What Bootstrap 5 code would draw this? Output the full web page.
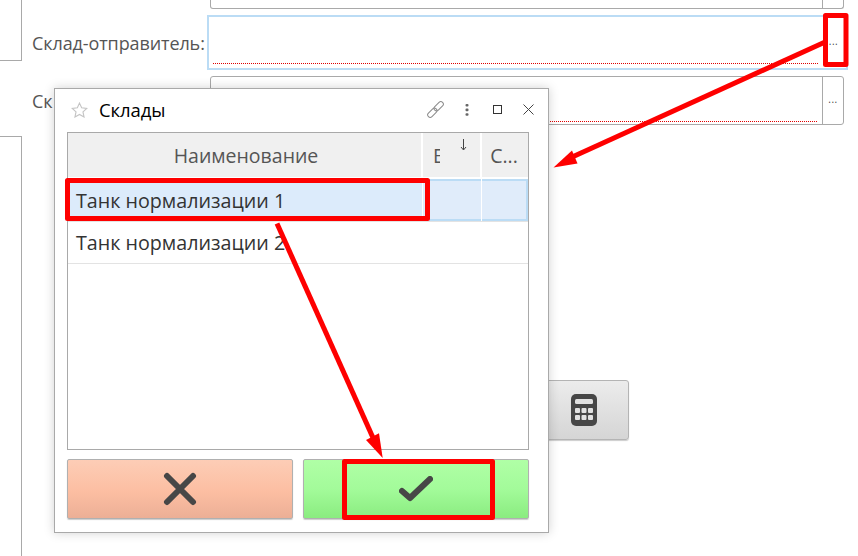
<!DOCTYPE html>
<html lang="ru">
<head>
<meta charset="utf-8">
<title>Склады</title>
<link href="https://cdn.jsdelivr.net/npm/bootstrap@5.3.0/dist/css/bootstrap.min.css" rel="stylesheet">
<style>
html,body{height:556px;overflow:hidden;background:#fff}
body{position:relative;font-family:"Open Sans","Noto Sans",sans-serif;color:#555}
.side-strip{width:22px;flex:none}
.side-box{width:22px;border:1px solid #a9a9a9;border-left:0}
.side-top{height:61px;border-top:0}
.side-bottom{height:420px;border-bottom:0;margin-top:75px}
.form-area{width:634px;margin-left:188px;flex:none}
.fld{border:1px solid #a9a9a9;border-radius:3px;display:flex;position:relative;background:#fff}
.fld-cut{height:9px;border-top:0;border-radius:0 0 3px 3px}
.fld-main{height:49px;margin-top:6px}
.fld-body{flex:1;position:relative}
.dots-line{position:absolute;height:1px;background:repeating-linear-gradient(90deg,#e00000 0 1px,transparent 1px 2px)}
.fld-body .dots-line{left:3px;right:4px;bottom:2px}
.fld-btn{width:21px;border-left:1px solid #a9a9a9;display:flex;align-items:center;justify-content:center;font-size:10px;line-height:1;letter-spacing:.5px;color:#444;padding-bottom:3px}
.row-line{display:flex;align-items:center}
.lbl{font-size:18px;line-height:22px;white-space:nowrap;width:178px;margin-left:-178px;flex:none;letter-spacing:-.1px}
.lbl-a{margin-left:-177px;width:177px}
.lbl-b{margin-top:6px}
.focus-wrap{height:55px;margin:6px -4px 0 -3px;border:2px solid #bbdcf5;position:relative;background:#fff}
.focus-wrap .dots-line{left:4px;right:27px;bottom:4px}
.focus-btn{position:absolute;right:2px;top:0;bottom:0;width:21px;display:flex;align-items:center;justify-content:center;font-size:10px;letter-spacing:.5px;color:#444;padding-bottom:3px;line-height:1}
.calc-btn{width:200px;height:60px;margin:255px 0 0 219px;border:1px solid #b4b4b4;border-radius:3px;background:linear-gradient(#ececec,#d5d5d5);display:flex;align-items:center;justify-content:flex-end;padding-right:31px;box-shadow:0 1px 1px #ccc}
.dlg{position:absolute;left:54px;top:88px;width:495px;height:445px;background:#fff;border:1px solid #a9a9a9;box-shadow:0 0 10px rgba(0,0,0,.18);padding:0 19px 0 12px;display:flex;flex-direction:column}
.dlg-head{height:43px;display:flex;align-items:center;flex:none;padding-bottom:2px}
.dlg-title{font-size:18.500px;color:#000;margin-left:11px;letter-spacing:-.1px}
.dlg-tools{margin-left:auto;margin-right:-15px;display:flex;align-items:center}
.tool{width:31px;height:20px;display:flex;align-items:center;justify-content:center}
.grid-wrap{height:318px;border:1px solid #a9a9a9;flex:none;overflow:hidden}
.grid-head{display:flex;height:44px;background:#f0f0f0;font-size:19.500px;color:#555}
.gh{display:flex;align-items:center;justify-content:center;border-right:2px solid #fff;position:relative;overflow:hidden;padding-top:2px}
.gh.c1{padding-left:3px}
.c1{width:355px;flex:none}
.c2{width:59px;flex:none}
.c3{width:46px;flex:none}
.gh.c3{border-right:0;padding-right:2px}
.clip-e{display:block;width:7px;overflow:hidden;position:absolute;left:10px;top:11px;line-height:24px}
.sort-mark{position:absolute;left:37px;top:6px}
.grid-row{display:flex;font-size:19.700px;color:#333;line-height:24px}
.row-sel{height:42px;margin-top:2px;background:#e0ecfa;box-shadow:inset -2px 0 #bbdcf5,inset 0 2px #bbdcf5,inset 0 -2px #bbdcf5;position:relative}
.row-sel .c1{background:#dcebfb;padding:10px 8px 8px}
.row-sel .c2,.row-sel .c1{border-right:1px solid #fff}
.sel-line{height:1px;background:#e3e3e3}
.row-plain{height:42px;border-bottom:1px solid #e3e3e3}
.row-plain .c1{padding:9px 8px}
.dlg-btns{display:flex;gap:10px;margin-top:9px;flex:none}
.act{height:60px;flex:1;border:1px solid #b0b0b0;border-radius:2px;display:flex;align-items:center;justify-content:center;box-shadow:0 1px 1px #ccc;padding:0}
.act-no{background:linear-gradient(#fdcdb6,#fcbea2 55%,#ecaf96)}
.act-ok{background:linear-gradient(#b0ffa6,#a3fb9a 50%,#8aec80)}
.marks{position:absolute;left:0;top:0;width:858px;height:556px;pointer-events:none}
</style>
</head>
<body>
<div class="d-flex">
  <div class="side-strip">
    <div class="side-box side-top"></div>
    <div class="side-box side-bottom"></div>
  </div>
  <div class="form-area">
    <div class="fld fld-cut"><div class="fld-body"></div><div class="fld-btn"></div></div>
    <div class="row-line focus-wrap">
      <div class="lbl lbl-a">Склад-отправитель:</div>
      <div class="dots-line"></div>
      <div class="focus-btn">...</div>
    </div>
    <div class="row-line">
      <div class="lbl lbl-b">Ск</div>
      <div class="fld fld-main w-100"><div class="fld-body"><div class="dots-line"></div></div><div class="fld-btn">...</div></div>
    </div>
    <div class="calc-btn">
      <svg width="26" height="32" viewBox="0 0 26 32"><rect width="26" height="32" rx="5" fill="#474747"/><rect x="4" y="5" width="18" height="5" rx="1.500" fill="#e2e2e2"/><g fill="#e2e2e2"><rect x="4" y="14" width="5" height="5" rx="1"/><rect x="10.500" y="14" width="5" height="5" rx="1"/><rect x="17" y="14" width="5" height="5" rx="1"/><rect x="4" y="21" width="5" height="5" rx="1"/><rect x="10.500" y="21" width="5" height="5" rx="1"/><rect x="17" y="21" width="5" height="5" rx="1"/></g></svg>
    </div>
  </div>
</div>

<div class="dlg">
  <div class="dlg-head">
    <svg class="ms-1" width="17" height="16" viewBox="0 0 18 17"><path d="M9 1.200l2.300 5 5.400.6-4 3.700 1.100 5.400L9 13.200l-4.800 2.700 1.100-5.400-4-3.700 5.400-.6z" fill="#fff" stroke="#c4c4c4" stroke-width="1.200"/></svg>
    <div class="dlg-title">Склады</div>
    <div class="dlg-tools">
      <div class="tool"><svg width="17" height="17" viewBox="0 0 17 17" fill="none" stroke="#8a8a8a" stroke-width="1"><g transform="rotate(-45 8.500 8.500)"><rect x="-1.500" y="6" width="11" height="5" rx="2.500"/><rect x="7.500" y="6" width="11" height="5" rx="2.500"/></g></svg></div>
      <div class="tool"><svg width="4" height="12" viewBox="0 0 4 12" fill="#666"><rect x="0.500" y="0" width="3" height="2.600" rx="1"/><rect x="0.500" y="4.600" width="3" height="2.600" rx="1"/><rect x="0.500" y="9.200" width="3" height="2.600" rx="1"/></svg></div>
      <div class="tool"><svg width="9" height="9" viewBox="0 0 9 9" fill="none" stroke="#333" stroke-width="1"><rect x=".5" y=".5" width="8" height="8"/></svg></div>
      <div class="tool"><svg width="11" height="11" viewBox="0 0 11 11" fill="none" stroke="#444" stroke-width="1"><path d="M.5.5l10 10M10.500.5l-10 10"/></svg></div>
    </div>
  </div>
  <div class="grid-wrap">
    <div class="grid-head">
      <div class="gh c1">Наименование</div>
      <div class="gh c2"><span class="clip-e">Е</span><svg class="sort-mark" width="7" height="12" viewBox="0 0 7 12" fill="none" stroke="#444" stroke-width="1"><path d="M3.500 0v10.500M1 8l2.500 3L6 8"/></svg></div>
      <div class="gh c3">С...</div>
    </div>
    <div class="grid-row row-sel">
      <div class="c1">Танк нормализации 1</div><div class="c2"></div><div class="c3"></div>
    </div>
    <div class="sel-line"></div>
    <div class="grid-row row-plain">
      <div class="c1">Танк нормализации 2</div><div class="c2"></div><div class="c3"></div>
    </div>
  </div>
  <div class="dlg-btns">
    <button type="button" class="btn act act-no" aria-label="Отмена"><svg width="34" height="34" viewBox="0 0 34 34" fill="none" stroke="#474747" stroke-width="6" stroke-linecap="round"><path d="M4 4l26 26M30 4L4 30"/></svg></button>
    <button type="button" class="btn act act-ok" aria-label="Выбрать"><svg width="34" height="26" viewBox="0 0 34 26" fill="none" stroke="#474747" stroke-width="6" stroke-linecap="round" stroke-linejoin="round"><path d="M3 15l8 7L31 3"/></svg></button>
  </div>
</div>

<svg class="marks" viewBox="0 0 858 556">
  <g fill="none" stroke="#fe0000" stroke-width="5" stroke-linejoin="round">
    <rect x="825.500" y="15.500" width="20.500" height="49"/>
    <rect x="67.500" y="180.500" width="360" height="38"/>
    <rect x="344.500" y="461.500" width="148" height="56"/>
    <path d="M824 42.500L570 158"/>
    <path d="M277 223.500L374 440"/>
  </g>
  <g fill="#fe0000">
    <path d="M553.500 167.500L572 150.500 577.500 163.500z"/>
    <path d="M382.700 458L366 440 379 433.300z"/>
  </g>
</svg>
</body>
</html>
